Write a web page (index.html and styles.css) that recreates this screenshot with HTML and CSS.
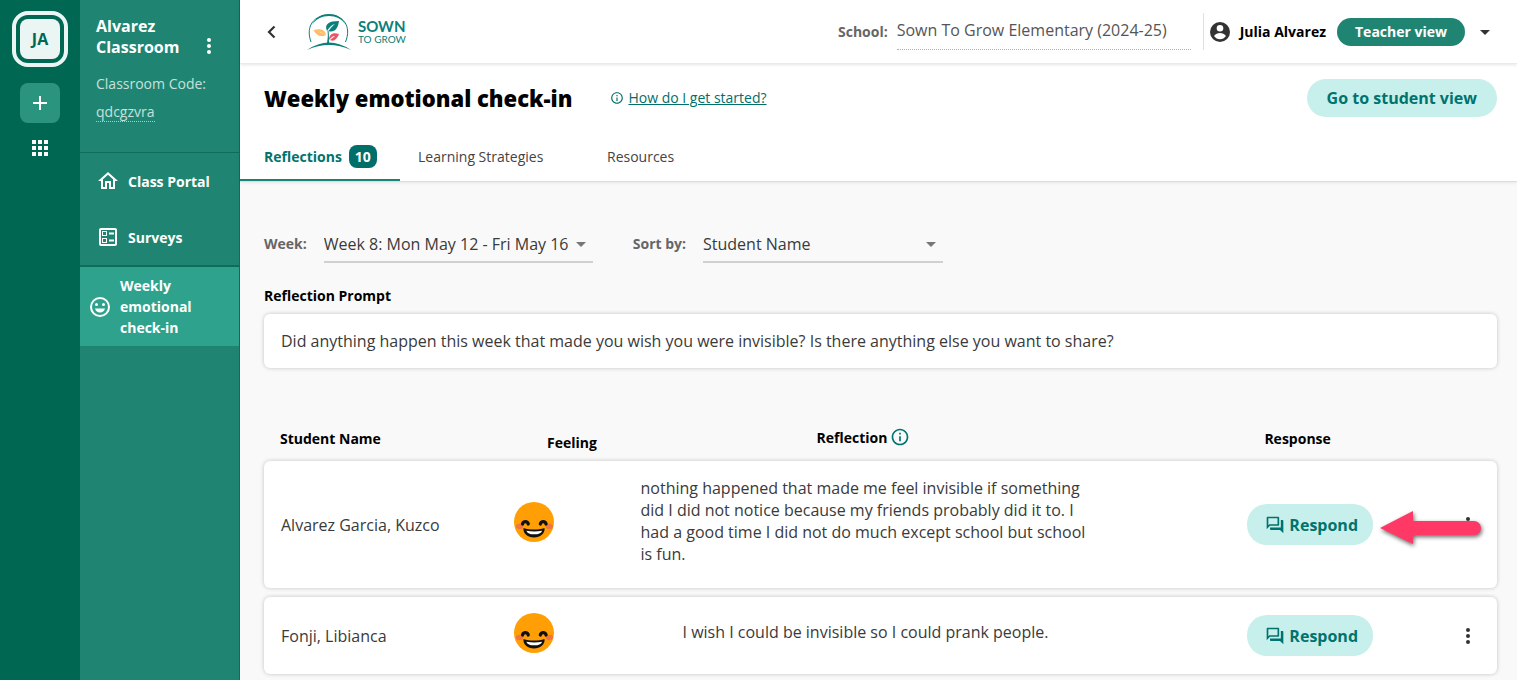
FILE: index.html
```html
<!DOCTYPE html>
<html lang="en">
<head>
<meta charset="utf-8">
<meta name="viewport" content="width=device-width, initial-scale=1">
<title>Weekly emotional check-in</title>
<link rel="stylesheet" href="styles.css">
</head>
<body>
<svg class="sprite" aria-hidden="true">
  <symbol id="dots" viewBox="0 0 24 24"><circle cx="12" cy="6" r="2"/><circle cx="12" cy="12" r="2"/><circle cx="12" cy="18" r="2"/></symbol>
  <symbol id="info" viewBox="0 0 24 24"><path d="M11 7h2v2h-2zm0 4h2v6h-2zm1-9C6.480 2 2 6.480 2 12s4.480 10 10 10 10-4.480 10-10S17.520 2 12 2zm0 18c-4.410 0-8-3.590-8-8s3.590-8 8-8 8 3.590 8 8-3.590 8-8 8z"/></symbol>
  <symbol id="chat" viewBox="0 0 24 24"><path d="M15 4v7H5.170L4 12.170V4h11m1-2H3c-.550 0-1 .450-1 1v14l4-4h10c.550 0 1-.450 1-1V3c0-.550-.450-1-1-1zm5 4h-2v9H6v2c0 .550.450 1 1 1h11l4 4V7c0-.550-.450-1-1-1z"/></symbol>
  <symbol id="grin" viewBox="0 0 40 40">
    <circle cx="20" cy="20" r="20" fill="#ff9f05"/>
    <ellipse cx="5.500" cy="24.500" rx="3.500" ry="2.700" fill="#f0763f"/><ellipse cx="35.500" cy="24.500" rx="3.500" ry="2.700" fill="#f0763f"/>
    <path d="M8.500 22c.8-3.300 5-3.300 5.800 0M26.300 22c.8-3.300 5-3.300 5.800 0" fill="none" stroke="#111" stroke-width="3.200" stroke-linecap="round"/>
    <path d="M9.500 26c6 2 15 2 21 0 .8 5.500-4.500 9.500-10.500 9.500S8.700 31.500 9.500 26z" fill="#111"/>
    <path d="M12.500 28.700c5 .9 10.500.9 15.500 0-.6 2.600-4 3.600-7.800 3.600s-7.100-1-7.700-3.600z" fill="#fff"/>
  </symbol>
</svg>
<div class="app">
  <nav class="rail" aria-label="Classrooms">
    <button class="avatar"><span class="avatar-face">JA</span></button>
    <button class="add" aria-label="Add"><svg width="16" height="16" viewBox="0 0 16 16"><path d="M8 1v14M1 8h14" stroke="#fff" stroke-width="2"/></svg></button>
    <button class="plain apps" aria-label="Apps"><svg width="16" height="16" viewBox="0 0 16 16" fill="#fff"><path d="M0 0h4v4H0zM6 0h4v4H6zM12 0h4v4h-4zM0 6h4v4H0zM6 6h4v4H6zM12 6h4v4h-4zM0 12h4v4H0zM6 12h4v4H6zM12 12h4v4h-4z"/></svg></button>
  </nav>
  <aside class="side">
    <div class="class-info">
      <div class="class-title"><h2>Alvarez Classroom</h2><button class="plain" aria-label="Classroom options"><svg width="24" height="24" fill="#fff"><use href="#dots"/></svg></button></div>
      <p class="code-label">Classroom Code:</p>
      <button class="plain code">qdcgzvra</button>
    </div>
    <a class="side-link" href="#"><svg width="24" height="24" viewBox="0 0 24 24" fill="#fff"><path d="M12 5.690l5 4.500V18h-2v-6H9v6H7v-7.810l5-4.500M12 3L2 12h3v8h6v-6h2v6h6v-8h3L12 3z"/></svg>Class Portal</a>
    <a class="side-link" href="#"><svg width="24" height="24" viewBox="0 0 24 24" fill="#fff"><path d="M13 7.500h5v2h-5zm0 7h5v2h-5zM19 3H5c-1.100 0-2 .9-2 2v14c0 1.100.9 2 2 2h14c1.100 0 2-.9 2-2V5c0-1.100-.9-2-2-2zm0 16H5V5h14v14zM11 6H6v5h5V6zm-1 4H7V7h3v3zm1 3H6v5h5v-5zm-1 4H7v-3h3v3z"/></svg>Surveys</a>
    <a class="side-link active" href="#"><svg width="24" height="24" viewBox="0 0 24 24" fill="#fff"><path d="M12 2a10 10 0 1 0 0 20 10 10 0 0 0 0-20zm0 18a8 8 0 1 1 0-16 8 8 0 0 1 0 16z"/><circle cx="8.500" cy="9.500" r="1.500"/><circle cx="15.500" cy="9.500" r="1.500"/><path d="M7 13.500h10c-.7 2.400-2.600 4-5 4s-4.300-1.600-5-4z"/></svg><span>Weekly emotional check-in</span></a>
  </aside>
  <div class="page">
    <header class="topbar">
      <button class="plain back" aria-label="Back"><svg width="24" height="24" viewBox="0 0 24 24"><path d="M14.500 6.500L9 12l5.500 5.500" fill="none" stroke="#333" stroke-width="2.200"/></svg></button>
      <a class="logo" href="#">
        <svg width="44" height="38" viewBox="0 0 44 38" aria-hidden="true">
          <path d="M4 29C-2 12 8 2 22 2s23 11 16.500 27" fill="none" stroke="#0b8079" stroke-width="1"/>
          <path d="M5 12C9 4 15 1 22 1s13 3 17 11C35 6 29 3 22 3S9 6 5 12z" fill="#0b8079"/>
          <path d="M0 37Q22 22 44 37 22 27 0 37z" fill="#0b8079"/>
          <path d="M20 30c1-6 1-8 .5-12l1-.5c.5 4 .5 8 .5 12.500z" fill="#0b8079"/>
          <path d="M20 18c-3-7 2-10 12-10-1 8-5 12-10.500 10 2-3 4-5 6.500-7-4 1-6 4-8 7z" fill="#0b8079"/>
          <path d="M19 22c-5 3-10 0-12.500-5 7-2 12 0 12.500 5-3-2-5-3-8-3.500 3 1 5 2 8 3.500z" fill="#fdbd6a"/>
          <path d="M22 27c0-6 4-8 10-6-2 5-5 8-9 6 2-2 4-3 5-4-3 0-4 2-6 4z" fill="#ec5565"/>
        </svg>
        <span class="logo-text"><b>SOWN</b><span>TO GROW</span></span>
      </a>
      <div class="school"><span class="label">School:</span><span class="school-name">Sown To Grow Elementary (2024-25)</span></div>
      <button class="plain account">
        <svg width="24" height="24" viewBox="0 0 24 24"><circle cx="12" cy="12" r="10" fill="#333"/><circle cx="12" cy="8.300" r="3.300" fill="#fff"/><path d="M6 15.900c1.200-1.900 4-2.900 6-2.900s4.800 1 6 2.900c-1.400 2-3.600 3.300-6 3.300s-4.600-1.300-6-3.300z" fill="#fff"/></svg>
        <span class="user">Julia Alvarez</span><span class="role">Teacher view</span>
        <svg width="24" height="24" viewBox="0 0 24 24"><path d="M7 10l5 5 5-5z" fill="#333"/></svg>
      </button>
    </header>
    <section class="heading">
      <div class="title-row">
        <h1>Weekly emotional check-in</h1>
        <a class="help" href="#"><svg width="14" height="14" fill="#006f6a"><use href="#info"/></svg><span>How do I get started?</span></a>
        <button class="pill student-view">Go to student view</button>
      </div>
      <nav class="tabs" aria-label="Sections">
        <a class="tab current" href="#">Reflections <span class="count">10</span></a>
        <a class="tab" href="#">Learning Strategies</a>
        <a class="tab" href="#">Resources</a>
      </nav>
    </section>
    <main class="content">
      <form class="filters">
        <label class="label" for="week">Week:</label>
        <div class="picker week"><select id="week"><option>Week 8: Mon May 12 - Fri May 16</option></select><svg width="24" height="24" viewBox="0 0 24 24"><path d="M7 10l5 5 5-5z" fill="#777"/></svg></div>
        <label class="label" for="sort">Sort by:</label>
        <div class="picker sort"><select id="sort"><option>Student Name</option></select><svg width="24" height="24" viewBox="0 0 24 24"><path d="M7 10l5 5 5-5z" fill="#777"/></svg></div>
      </form>
      <h3>Reflection Prompt</h3>
      <p class="card prompt">Did anything happen this week that made you wish you were invisible? Is there anything else you want to share?</p>
      <table>
        <thead>
          <tr>
            <th>Student Name</th>
            <th class="feeling">Feeling</th>
            <th class="reflection">Reflection <svg width="20" height="20" fill="#00736e"><use href="#info"/></svg></th>
            <th class="response">Response</th>
            <th></th>
          </tr>
        </thead>
        <tbody>
          <tr class="card">
            <td>Alvarez Garcia, Kuzco</td>
            <td class="feeling"><svg width="40" height="40" role="img" aria-label="Happy"><use href="#grin"/></svg></td>
            <td class="reflection"><p>nothing happened that made me feel invisible if something did I did not notice because my friends probably did it to. I had a good time I did not do much except school but school is fun.</p></td>
            <td class="response"><button class="pill respond"><svg width="20" height="20" fill="currentColor"><use href="#chat"/></svg>Respond</button></td>
            <td class="more"><button class="plain" aria-label="More"><svg width="24" height="24" fill="#333"><use href="#dots"/></svg></button>
              <svg class="pointer" width="110" height="44" viewBox="0 0 110 44" aria-hidden="true"><path d="M5 22L38 5v10h61a7 7 0 0 1 0 14H38v9z" fill="#ff3866"/></svg></td>
          </tr>
          <tr class="card">
            <td>Fonji, Libianca</td>
            <td class="feeling"><svg width="40" height="40" role="img" aria-label="Happy"><use href="#grin"/></svg></td>
            <td class="reflection"><p>I wish I could be invisible so I could prank people.</p></td>
            <td class="response"><button class="pill respond"><svg width="20" height="20" fill="currentColor"><use href="#chat"/></svg>Respond</button></td>
            <td class="more"><button class="plain" aria-label="More"><svg width="24" height="24" fill="#333"><use href="#dots"/></svg></button></td>
          </tr>
        </tbody>
      </table>
    </main>
  </div>
</div>
</body>
</html>
```
FILE: styles.css
```css
* { box-sizing: border-box; }
body { margin: 0; font: 16px/22px "Open Sans", sans-serif; color: #3a3a3a; background: #f9f9f9; }
h1, h2, h3, p { margin: 0; }
svg { display: block; flex: none; }
a { color: inherit; text-decoration: none; }
button, select { font: inherit; color: inherit; }
button { border: 0; cursor: pointer; }
.plain { background: none; padding: 0; }
.sprite { position: absolute; width: 0; height: 0; }
.app { display: flex; min-height: 100vh; }

.rail { width: 80px; flex: none; background: #006753; display: flex; flex-direction: column; align-items: center; padding-top: 11px; }
.avatar { width: 56px; height: 56px; padding: 4px; border: 4px solid #ebf5f3; border-radius: 16px; background: none; }
.avatar-face { display: grid; place-items: center; height: 40px; border-radius: 8px; background: #ebf5f3; color: #006753; font-weight: 700; }
.add { width: 40px; height: 40px; margin-top: 16px; padding: 0; display: grid; place-items: center; border-radius: 8px; background: #2b947f; }
.apps { margin-top: 17px; }

.side { width: 160px; flex: none; background: #1f8572; border-right: 1px solid #0d6d5a; color: #fff; }
.class-info { height: 153px; padding: 16px 18px 0 16px; border-bottom: 1px solid #0d6d5a; }
.class-title { display: flex; justify-content: space-between; }
.class-title h2 { width: 90px; font-size: 16px; line-height: 21px; }
.class-title .plain { align-self: flex-end; width: 24px; }
.code-label { margin-top: 16px; font-size: 14px; line-height: 20px; color: #c7e1dc; }
.code { display: block; margin-top: 8px; font-size: 14px; line-height: 19px; color: #c7e1dc; border-bottom: 1px dotted #a5cfc7; }
.side-link { display: flex; align-items: center; gap: 8px; height: 56px; padding: 0 16px; font-size: 14px; line-height: 21px; font-weight: 700; }
.side-link.active { height: 81px; padding: 0 8px; border-top: 2px solid #0d6d5a; background: #2fa28d; }

.page { flex: 1; min-width: 0; }
.topbar { display: flex; align-items: center; height: 64px; padding-left: 20px; background: #fff; border-bottom: 1px solid #eaeaea; box-shadow: 0 1px 3px #0000001a; position: relative; }
.logo { display: flex; align-items: center; gap: 7px; margin-left: 23px; color: #0b8079; font-family: Lato, sans-serif; }
.logo-text { display: flex; flex-direction: column; font-size: 10px; line-height: 12px; }
.logo-text b { font-size: 15px; line-height: 14px; }
.label { font-size: 14px; font-weight: 700; color: #666; }
.school { display: flex; align-items: center; gap: 9px; margin-left: auto; height: 37px; }
.school-name { width: 294px; height: 37px; line-height: 34px; border-bottom: 1px dotted #b0b0b0; color: #555; }
.account { display: flex; align-items: center; height: 37px; margin-left: 12px; padding: 0 20px 0 4px; border-left: 1px solid #e0e0e0; }
.user { margin: 0 11px 0 8px; font-size: 14px; font-weight: 700; color: #000; }
.role { margin-right: 8px; padding: 0 18px; border-radius: 14px; line-height: 28px; font-size: 14px; font-weight: 700; color: #fff; background: #1f8572; }

.heading { background: #fff; border-bottom: 1px solid #ddd; box-shadow: 0 1px 3px #00000014; }
.title-row { display: flex; align-items: center; padding: 15px 20px 0 24px; }
h1 { font-size: 22px; line-height: 36px; font-weight: 800; color: #000; }
.help { display: flex; align-items: center; gap: 4px; margin-left: 38px; font-size: 14px; color: #006f6a; }
.help span { text-decoration: underline; }
.pill { background: #c7efeb; color: #00736e; font-weight: 700; border-radius: 20px; }
.student-view { margin-left: auto; height: 38px; padding: 0 20px; }
.tabs { display: flex; height: 64px; font-size: 14px; color: #444; }
.tab { display: flex; align-items: center; gap: 7px; padding: 17px 18px 0; width: 189px; border-bottom: 2px solid transparent; }
.tab.current { width: 160px; padding-left: 24px; padding-right: 0; color: #00736e; font-weight: 700; border-color: #1a8277; }
.count { padding: 0 6px; border-radius: 8px; line-height: 23px; background: #006f6a; color: #fff; }

.content { padding: 43px 20px 5px 24px; }
.filters { display: flex; align-items: center; }
.picker { position: relative; height: 38px; margin: 0 40px 0 17px; border-bottom: 2px solid #d0d0d0; }
.picker select { appearance: none; width: 100%; height: 37px; padding: 0 24px 0 0; border: 0; background: none; }
.picker svg { position: absolute; right: 0; top: 7px; pointer-events: none; }
.week { width: 269px; }
.sort { width: 240px; }
h3 { margin-top: 22px; font-size: 14px; color: #000; }
.card { background: #fff; border-radius: 6px; box-shadow: 0 0 4px #00000038; }
.prompt { margin-top: 7px; padding: 16px 17px; }

table, thead, tbody { display: block; }
table { margin-top: 56px; }
tr { display: grid; grid-template-columns: 233fr 122fr 459fr 278fr 107fr; align-items: center; padding: 0 16px; }
th, td { padding: 0; text-align: left; }
th { font-size: 14px; color: #000; }
th.feeling { padding: 8px 5px 0 0; text-align: center; }
th.reflection { display: flex; justify-content: center; gap: 3px; padding: 0 4px 3px 0; }
th.response { padding-right: 43px; text-align: right; }
tbody { display: grid; gap: 9px; margin-top: 7px; }
tbody tr { padding: 16px 17px; }
td.feeling { padding-bottom: 5px; }
td.reflection { display: flex; justify-content: center; padding-bottom: 7px; }
td.reflection p { max-width: 450px; }
td.response, td.more { display: flex; justify-content: flex-end; position: relative; }
.respond { display: flex; align-items: center; gap: 4px; height: 41px; padding: 0 15px 0 18px; }
.pointer { position: absolute; right: -5px; top: -7px; filter: drop-shadow(1px 2px 2px #00000099); }
```
